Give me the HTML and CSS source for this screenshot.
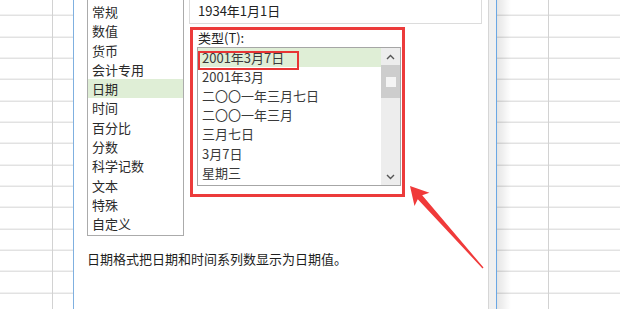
FILE: index.html
```html
<!DOCTYPE html>
<html lang="zh">
<head>
<meta charset="utf-8">
<link rel="stylesheet" href="styles.css">
</head>
<body>
<div class="screen">
  <div class="sheet sheet-left"></div>
  <div class="dialog">
    <div class="dlg-body">
      <div class="main">
        <ul class="cat-list">
          <li>常规</li>
          <li>数值</li>
          <li>货币</li>
          <li>会计专用</li>
          <li class="sel">日期</li>
          <li>时间</li>
          <li>百分比</li>
          <li>分数</li>
          <li>科学记数</li>
          <li>文本</li>
          <li>特殊</li>
          <li>自定义</li>
        </ul>
        <div class="right-col">
          <div class="sample">1934年1月1日</div>
          <div class="type-section">
            <div class="type-label">类型(T):</div>
            <div class="type-box">
              <ul class="type-list">
                <li class="sel">2001年3月7日</li>
                <li>2001年3月</li>
                <li>二〇〇一年三月七日</li>
                <li>二〇〇一年三月</li>
                <li>三月七日</li>
                <li>3月7日</li>
                <li>星期三</li>
              </ul>
              <div class="scrollbar">
                <div class="sb-btn">
                  <svg width="9" height="6" viewBox="0 0 9 6"><path d="M1 5 L4.5 1.5 L8 5" fill="none" stroke="#555" stroke-width="1.4"/></svg>
                </div>
                <div class="sb-thumb"><span class="grip"></span></div>
                <div class="sb-track"></div>
                <div class="sb-btn">
                  <svg width="9" height="6" viewBox="0 0 9 6"><path d="M1 1 L4.5 4.5 L8 1" fill="none" stroke="#555" stroke-width="1.4"/></svg>
                </div>
              </div>
              <div class="mark"></div>
            </div>
          </div>
        </div>
      </div>
      <p class="desc">日期格式把日期和时间系列数显示为日期值。</p>
    </div>
    <div class="dlg-frame"></div>
  </div>
  <div class="sheet sheet-right"></div>
  <svg class="arrow" width="620" height="309" viewBox="0 0 620 309">
    <polygon points="410,186 429.4,192.8 422.2,195.2 483.5,267.5 482.5,268.5 417.8,199.2 414.5,206.1" fill="#f03a3a"/>
  </svg>
</div>
</body>
</html>
```

FILE: styles.css
```css
* { box-sizing: border-box; }
html, body { margin: 0; padding: 0; background: #fff; }
body {
  font-family: "Noto Sans CJK SC", "Noto Sans", sans-serif;
  font-size: 13px;
  color: #222;
}
.screen {
  position: relative;
  width: 620px;
  height: 309px;
  overflow: hidden;
  display: flex;
}
.sheet {
  height: 309px;
  background-color: #fff;
}
.sheet-left {
  width: 73px;
  background-image:
    linear-gradient(to right, transparent 52px, #d2d2d2 52px, #d2d2d2 53px, transparent 53px),
    repeating-linear-gradient(to bottom, transparent 0, transparent 20.33px, #d4d4d4 20.33px, #d4d4d4 21.33px);
  background-position: 0 0, 0 -5.33px;
}
.sheet-right {
  flex: 1;
  background-image:
    linear-gradient(to right, rgba(0,0,0,0.10), rgba(0,0,0,0) 14px),
    linear-gradient(to right, transparent 51px, #d2d2d2 51px, #d2d2d2 52px, transparent 52px),
    repeating-linear-gradient(to bottom, transparent 0, transparent 20.33px, #d4d4d4 20.33px, #d4d4d4 21.33px);
  background-position: 0 0, 0 0, 0 -5.33px;
}
.dialog {
  width: 424px;
  height: 309px;
  display: flex;
  border-left: 1px solid #7fb0e0;
}
.dlg-body {
  width: 415px;
  background: #fff;
  border-right: 1px solid #d6d6d6;
  padding-left: 13px;
}
.dlg-frame {
  flex: 1;
  background: #f0f0f0;
  border-right: 1px solid #6aa7e4;
}
.main {
  display: flex;
  gap: 5px;
  align-items: flex-start;
}
ul { list-style: none; margin: 0; padding: 0; }
.cat-list {
  width: 97px;
  margin-top: -1px;
  border: 1px solid #ababab;
  padding: 2px 0 1px;
  color: #2a2a2a;
}
.cat-list li {
  height: 19.3px;
  line-height: 19.3px;
  padding-left: 4px;
}
.cat-list li.sel { background: #dfeed6; }
.right-col {
  width: 293px;
}
.sample {
  margin-top: -2px;
  height: 26px;
  border: 1px solid #dcdcdc;
  padding-left: 8px;
  line-height: 24px;
  color: #222;
}
.type-section {
  margin-top: 3px;
  margin-left: 1px;
  width: 215px;
  height: 170px;
  border: 3px solid #ec3b3b;
  padding: 0 2px 0 4px;
}
.type-label {
  height: 17px;
  line-height: 16px;
  padding-left: 1px;
  color: #222;
}
.type-box {
  position: relative;
  display: flex;
  width: 204px;
  height: 139px;
  border: 1px solid #a6a6a6;
}
.type-list {
  flex: 1;
  color: #3a3a3a;
}
.type-list li {
  height: 19.33px;
  line-height: 19.33px;
  padding-left: 4px;
}
.type-list li.sel { background: #dfeed6; height: 18.5px; }
.scrollbar {
  width: 19px;
  display: flex;
  flex-direction: column;
  background: #ededed;
}
.sb-btn {
  height: 17px;
  display: flex;
  align-items: center;
  justify-content: center;
}
.sb-thumb {
  height: 33px;
  background: #cdcdcd;
  display: flex;
  align-items: center;
  justify-content: center;
}
.grip {
  width: 10px;
  height: 10px;
  background: #f4f4f4;
}
.sb-track { flex: 1; }
.mark {
  position: absolute;
  left: 0;
  top: 3px;
  width: 101px;
  height: 19px;
  border: 2.5px solid #e83434;
}
.desc {
  margin: 15px 0 0;
  line-height: 16px;
  color: #1e1e1e;
}
.arrow {
  position: absolute;
  left: 0;
  top: 0;
  pointer-events: none;
}
```
